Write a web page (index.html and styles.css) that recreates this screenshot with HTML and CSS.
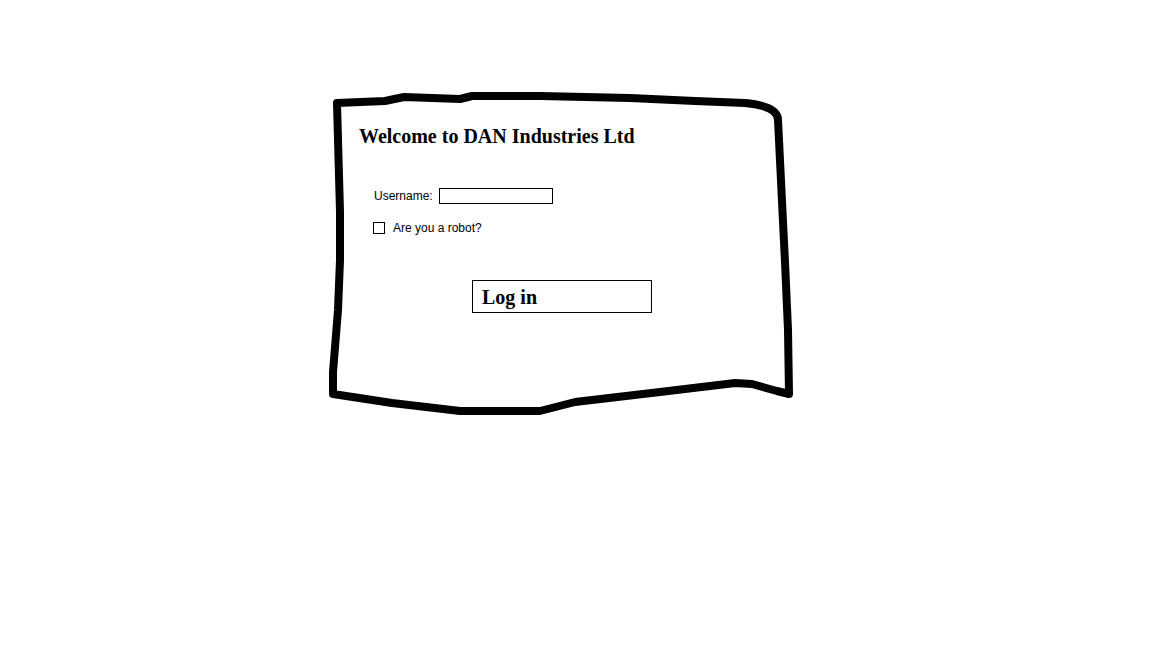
FILE: index.html
```html
<!DOCTYPE html>
<html>
<head>
<meta charset="utf-8">
<title>Welcome to DAN Industries Ltd</title>
<link rel="stylesheet" href="styles.css">
</head>
<body>
<div class="card">
  <svg class="frame" width="470" height="330" viewBox="327 90 470 330" xmlns="http://www.w3.org/2000/svg">
    <path d="M337,103 L385,101 L404,97 L460,99 L472,96 L540,96 L630,98 L695,101 L745,103 Q778,106 778,120 L785,262 L788,330 L789,394 L777,391 L752,384 L735,383 L660,392 L575,402 L540,411 L460,411 L392,403 L333,394 L333,372 L338,310 L340,260 L340,212 Z" fill="none" stroke="#000" stroke-width="8" stroke-linejoin="round"/>
  </svg>
  <h1 class="title">Welcome to DAN Industries Ltd</h1>
  <div class="field">
    <label class="label" for="user">Username:</label>
    <input class="input" id="user" type="text">
  </div>
  <div class="check">
    <input class="box" id="robot" type="checkbox">
    <label class="label" for="robot">Are you a robot?</label>
  </div>
  <button class="login" type="button">Log in</button>
</div>
</body>
</html>
```
FILE: styles.css
```css
html, body {
  margin: 0;
  padding: 0;
  background: #fff;
}
body {
  padding: 96px 0 0 333px;
}
.card {
  position: relative;
  width: 458px;
  height: 320px;
  box-sizing: border-box;
  padding: 29px 0 0 26px;
  display: flex;
  flex-direction: column;
  align-items: flex-start;
}
.frame {
  position: absolute;
  left: -6px;
  top: -6px;
  pointer-events: none;
}
.title {
  position: relative;
  margin: 0;
  font-family: "Liberation Serif", "Times New Roman", serif;
  font-weight: bold;
  font-size: 20px;
  line-height: 22px;
  color: #000;
}
.field {
  position: relative;
  display: flex;
  align-items: center;
  margin: 41px 0 0 15px;
  height: 16px;
}
.label {
  font-family: "Liberation Sans", Arial, sans-serif;
  font-size: 12px;
  line-height: 12px;
  color: #000;
}
.input {
  margin: 0 0 0 6px;
  width: 114px;
  height: 16px;
  box-sizing: border-box;
  border: 1px solid #000;
  border-radius: 0;
  padding: 0 2px;
  outline: none;
  background: #fff;
}
.check {
  position: relative;
  display: flex;
  align-items: center;
  margin: 18px 0 0 14px;
  height: 12px;
}
.box {
  -webkit-appearance: none;
  appearance: none;
  margin: 0 8px 0 0;
  width: 12px;
  height: 12px;
  box-sizing: border-box;
  border: 1px solid #000;
  border-radius: 0;
  background: #fff;
}
.login {
  position: relative;
  margin: 46px 0 0 113px;
  width: 180px;
  height: 33px;
  box-sizing: border-box;
  border: 1px solid #000;
  border-radius: 0;
  background: #fff;
  padding: 5px 0 0 9px;
  text-align: left;
  font-family: "Liberation Serif", "Times New Roman", serif;
  font-weight: bold;
  font-size: 20px;
  line-height: 22px;
  color: #000;
  display: flex;
  align-items: flex-start;
}
```
